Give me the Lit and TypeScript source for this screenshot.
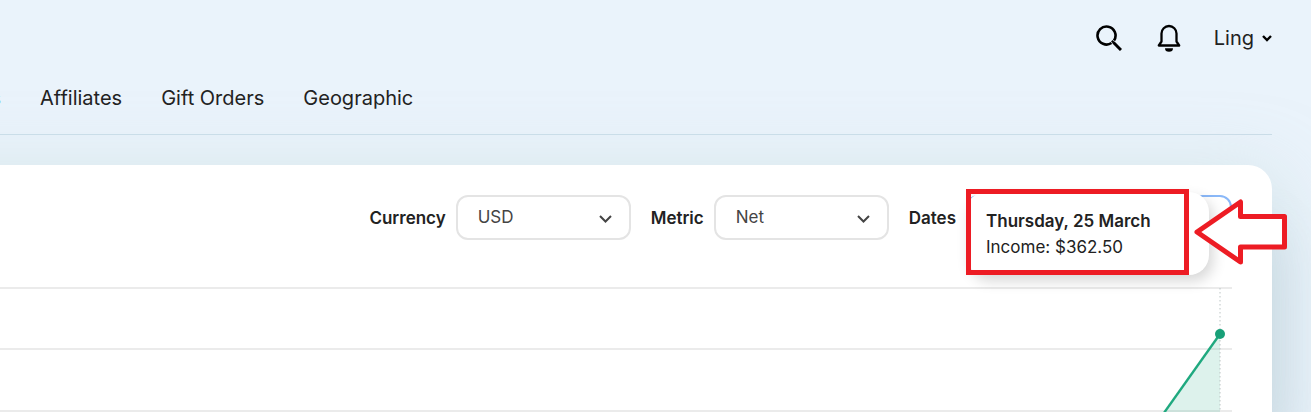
import { LitElement, html, css, svg } from "lit";
import { customElement } from "lit/decorators.js";

const chevron = html`<svg class="chevron" width="13" height="8" viewBox="0 0 13 8" aria-hidden="true">
  <path d="M1 1l5.500 5.500L12 1" fill="none" stroke="#444" stroke-width="2"/></svg>`;

@customElement("app-root")
export class AppRoot extends LitElement {
  static styles = css`
    :host { display: block; height: 100vh; overflow: hidden; font-family: Inter, "Noto Sans", sans-serif; color: #222;
      background: #eaf3fb; }
    * { box-sizing: border-box; }
    header { display: flex; justify-content: flex-end; align-items: center; height: 76px; padding-right: 39px; }
    .icon { display: flex; padding: 0; border: 0; background: none; }
    .search { margin-right: 35px; }
    .bell { margin-right: 33px; }
    .user { display: flex; align-items: center; gap: 8px; padding: 0; border: 0; background: none;
      font: 20px/24px Inter, sans-serif; color: #222; }
    nav { display: flex; gap: 39px; height: 59px; margin-right: 39px; padding-top: 10px;
      border-bottom: 1px solid #cbdde9; }
    nav a { font-size: 20px; line-height: 24px; color: #222; text-decoration: none; white-space: nowrap; }
    nav a.current { display: flex; justify-content: flex-end; width: 1px; overflow: hidden; color: #1688d8; }
    main { position: relative; margin: 30px 39px 0 -100px; padding: 30px 40px 0 0; background: #fff;
      border-radius: 0 24px 0 0;
      box-shadow: 0 20px 70px 10px rgba(190, 215, 215, 0.5), 0 70px 60px rgba(90, 110, 150, 0.22); }
    .filters { display: flex; justify-content: flex-end; align-items: center; gap: 20px; }
    .field { display: flex; align-items: center; gap: 10px; }
    label { font-size: 17px; font-weight: 600; line-height: 24px; }
    .box { position: relative; width: 175px; height: 45px; }
    .box.dates { width: 266px; }
    select { appearance: none; width: 100%; height: 100%; padding: 0 20px 2px; border: 2px solid #e4e4e4;
      border-radius: 12px; background: #fff; color: #444; font: 17px/24px Inter, sans-serif; }
    .dates select { border-color: #8ab8f8; }
    .chevron { position: absolute; right: 19px; top: 20px; pointer-events: none; }
    .chart { display: block; width: 100%; height: 140px; margin-top: 47px; overflow: visible; }
    .tip { position: absolute; right: 63px; top: 27px; width: 243px; height: 83px; padding: 16px 20px;
      border-radius: 20px; background: #fff; box-shadow: 4px 6px 14px rgba(0, 0, 0, 0.16); font-size: 17px;
      line-height: 26px; white-space: nowrap; }
    .tip strong { display: block; font-weight: 600; }
    .frame { position: absolute; right: 83px; top: 24px; width: 223px; height: 86px; border: 5px solid #ed1c24; }
    .arrow { position: absolute; right: -17px; top: 31px; }
  `;

  render() {
    return html`
      <header>
        <button class="icon search" aria-label="Search">
          <svg width="26" height="26" viewBox="0 0 26 26" fill="none" stroke="#000" stroke-width="2.600">
            <path d="M15.500 18A9 9 0 1 1 18 15.500"/><path d="M15.800 15.800l2 2" stroke-width="2.200"/>
            <path d="M17.500 17.500l7.500 7.500" stroke-width="3"/></svg>
        </button>
        <button class="icon bell" aria-label="Notifications">
          <svg width="24" height="28" viewBox="0 0 24 28">
            <path d="M1.800 21.500L4.500 17.500V9.500a7.500 7.500 0 0 1 15 0V17.500l2.700 4z" fill="none" stroke="#000"
              stroke-width="2.300" stroke-linejoin="round"/>
            <path d="M8 24.200h8a4 3.500 0 0 1-8 0z"/></svg>
        </button>
        <button class="user">Ling
          <svg width="10" height="7" viewBox="0 0 10 7" aria-hidden="true">
            <path d="M1 1l4 4 4-4" fill="none" stroke="#000" stroke-width="2.400"/></svg>
        </button>
      </header>
      <nav>
        <a class="current" href="#sales">Sales</a>
        <a href="#affiliates">Affiliates</a>
        <a href="#gifts">Gift Orders</a>
        <a href="#geographic">Geographic</a>
      </nav>
      <main>
        <div class="filters">
          <div class="field"><label for="currency">Currency</label>
            <div class="box"><select id="currency"><option>USD</option></select>${chevron}</div></div>
          <div class="field"><label for="metric">Metric</label>
            <div class="box"><select id="metric"><option>Net</option></select>${chevron}</div></div>
          <div class="field"><label for="dates">Dates</label>
            <div class="box dates"><select id="dates"><option></option></select></div></div>
        </div>
        <svg class="chart" role="img" aria-label="Income">
          ${[1, 62, 124].map((y) => svg`<line x1="0" x2="100%" y1=${y} y2=${y} stroke="#e4e4e4" stroke-width="1.500"/>`)}
          <svg x="100%" overflow="visible">
            <path d="M-12 47V140H-78z" fill="#1aa67d" fill-opacity="0.150"/>
            <path d="M-12 1V140" stroke="#bbc4c4" stroke-dasharray="1.500 2.500"/>
            <path d="M-12 47L-78 140" stroke="#1fa97f" stroke-width="2.400"/>
            <circle cx="-12" cy="47" r="5" fill="#18a078"/>
          </svg>
        </svg>
        <div class="tip" role="tooltip"><strong>Thursday, 25 March</strong>Income: $362.50</div>
        <div class="frame"></div>
        <svg class="arrow" width="96" height="72" viewBox="0 0 96 72" aria-hidden="true">
          <path d="M4 36L47.500 6V20.500H91.500V51H47.500V66z" fill="#fff" stroke="#ed1c24" stroke-width="5"
            stroke-linejoin="round"/></svg>
      </main>
    `;
  }
}
